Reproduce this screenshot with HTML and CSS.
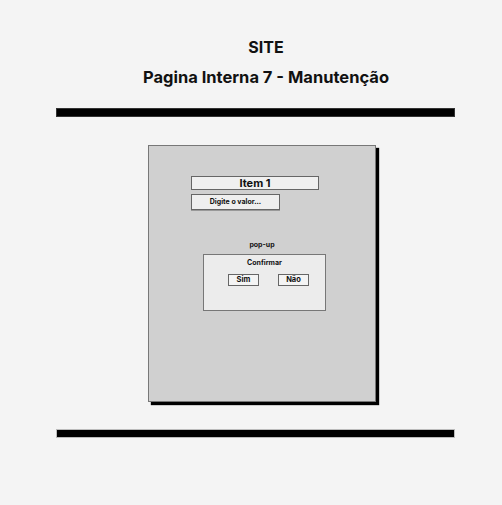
FILE: index.html
```html
<!DOCTYPE html>
<html lang="pt">
<head>
  <meta charset="UTF-8" />
  <title>SITE - Pagina Interna 7</title>
  <link rel="stylesheet" href="styles.css">
</head>
<body>
  <!-- Header -->
  <div class="header">
    <h1 class="site">SITE</h1>
    <h2 class="page-title">Pagina Interna 7 - Manutenção</h2>
  </div>

  <div class="bar bar-top"></div>

  <!-- Main card -->
  <div class="card">
    <div class="item-box">Item 1</div>
    <div class="input-box">Digite o valor...</div>

    <p class="popup-label">pop-up</p>
    <div class="popup">
      <p class="popup-title">Confirmar</p>
      <div class="popup-actions">
        <div class="btn">Sim</div>
        <div class="btn">Não</div>
      </div>
    </div>
  </div>

  <div class="bar bar-bottom"></div>
</body>
</html>
```

FILE: styles.css
```css
* {
  margin: 0;
  padding: 0;
  box-sizing: border-box;
}
body {
  font-family: 'Inter', 'Liberation Sans', sans-serif;
  background: #f4f4f4;
  color: #111;
  width: 502px;
  height: 505px;
  overflow: hidden;
}
.header {
  padding: 37px 0 0 30px;
  text-align: center;
}
.site {
  font-size: 16px;
  line-height: 20px;
  font-weight: 700;
}
.page-title {
  margin-top: 9px;
  font-size: 16.5px;
  line-height: 22px;
  font-weight: 700;
}
.bar {
  margin-left: 56px;
  width: 399px;
  height: 9px;
  background: #000;
  border: 1px solid #333;
}
.bar-top {
  margin-top: 20px;
}
.bar-bottom {
  margin-top: 27px;
  border-color: #bbb;
}

/* Card */
.card {
  margin: 28px 0 0 148px;
  width: 228px;
  height: 257px;
  background: #d0d0d0;
  border: 1px solid #777;
  box-shadow: 3px 3px 1px #000;
  padding: 30px 0 0 42px;
  display: flex;
  flex-direction: column;
  align-items: flex-start;
}
.item-box {
  width: 128px;
  height: 14px;
  background: #f0f0f0;
  border: 1px solid #666;
  font-size: 11px;
  line-height: 12px;
  font-weight: 700;
  text-align: center;
}
.input-box {
  margin-top: 4px;
  width: 89px;
  height: 16px;
  background: #efefef;
  border: 1px solid #666;
  box-shadow: 0 1px 0 #999;
  font-size: 7px;
  line-height: 14px;
  font-weight: 700;
  text-align: center;
}
.popup-label {
  align-self: center;
  margin: 29px 0 0 -42px;
  font-size: 7px;
  line-height: 12px;
  font-weight: 700;
}
.popup {
  margin: 3px 0 0 12px;
  width: 123px;
  height: 57px;
  background: #ececec;
  border: 1px solid #777;
  padding-top: 3px;
}
.popup-title {
  text-align: center;
  font-size: 7px;
  line-height: 10px;
  font-weight: 700;
}
.popup-actions {
  margin-top: 6px;
  padding-left: 24px;
  display: flex;
  gap: 19px;
}
.btn {
  width: 31px;
  height: 12px;
  background: #f4f4f4;
  border: 1px solid #666;
  font-size: 7.5px;
  line-height: 10px;
  font-weight: 700;
  text-align: center;
}
```
